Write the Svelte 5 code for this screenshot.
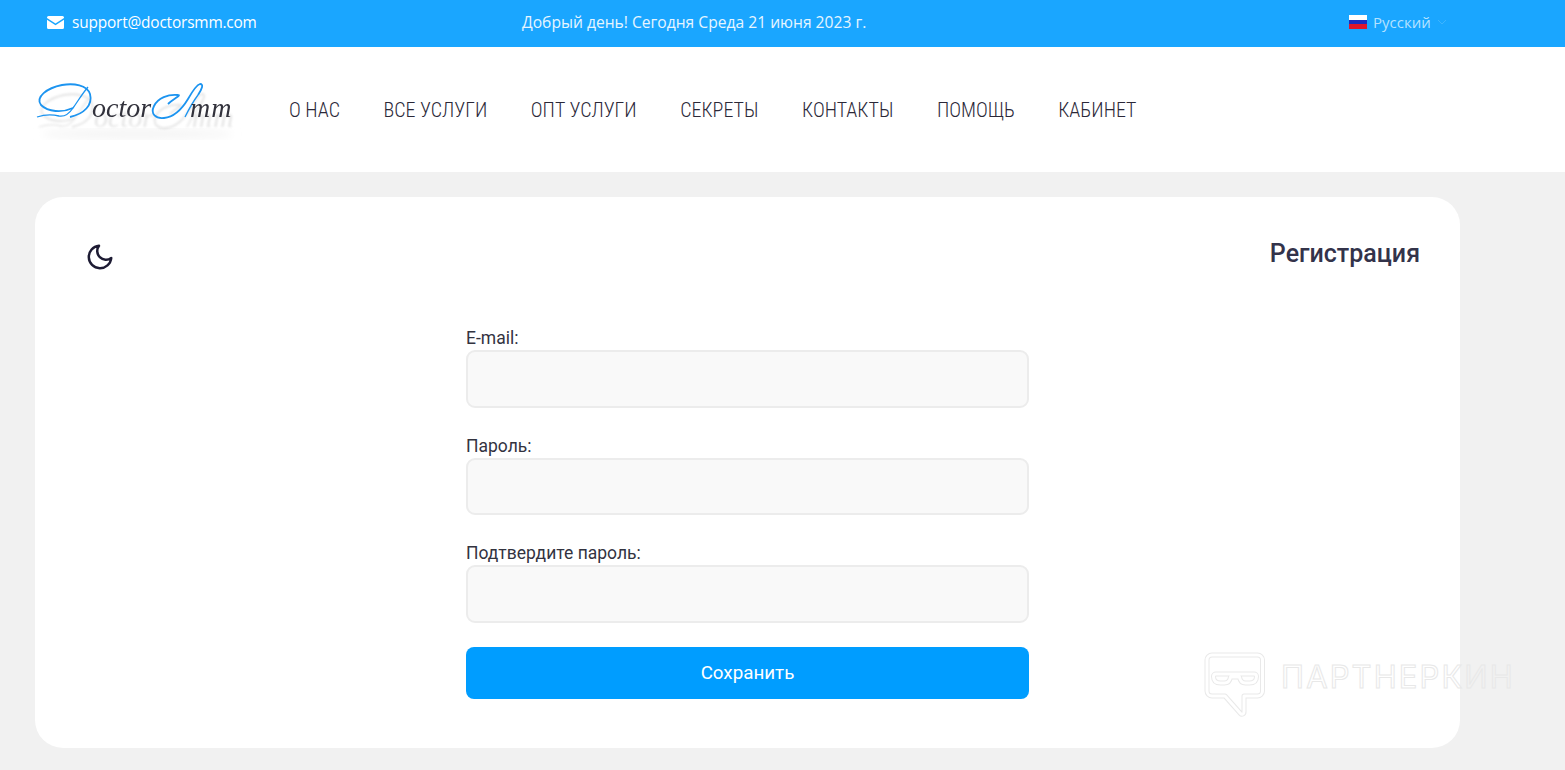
<script>
  const navItems = ['О НАС', 'ВСЕ УСЛУГИ', 'ОПТ УСЛУГИ', 'СЕКРЕТЫ', 'КОНТАКТЫ', 'ПОМОЩЬ', 'КАБИНЕТ'];
  const fields = [
    { id: 'email', label: 'E-mail:', type: 'email' },
    { id: 'password', label: 'Пароль:', type: 'password' },
    { id: 'confirm', label: 'Подтвердите пароль:', type: 'password' }
  ];
</script>

<div class="topbar">
  <div class="support">
    <svg class="mail" viewBox="0 0 17 13" width="17" height="13">
      <path d="M1.500 0h14A1.500 1.500 0 0 1 17 1.500v.6L8.500 7.600 0 2.100v-.6A1.500 1.500 0 0 1 1.500 0z" fill="#fff" />
      <path d="M0 3.800l8.500 5.400L17 3.800v7.700a1.500 1.500 0 0 1-1.500 1.500h-14A1.500 1.500 0 0 1 0 11.500z" fill="#fff" />
    </svg>
    <span>support@doctorsmm.com</span>
  </div>
  <div class="greeting">Добрый день! Сегодня Среда 21 июня 2023 г.</div>
  <div class="lang">
    <span class="flag"><i class="white"></i><i class="blue"></i><i class="red"></i></span>
    <span class="lang-name">Русский</span>
    <svg class="chevron" viewBox="0 0 10 6" width="10" height="6">
      <path d="M1 1l4 4 4-4" fill="none" stroke="#3db4ff" stroke-width="1" />
    </svg>
  </div>
</div>

<header>
  <div class="logo">
    <svg viewBox="0 0 210 70" width="210" height="70">
      <defs>
        <filter id="soft"><feGaussianBlur stdDeviation="4" /></filter>
      </defs>
      <ellipse cx="105" cy="59" rx="96" ry="5" fill="#f4f4f4" filter="url(#soft)" />
      <g class="mark">
        <path class="swash" d="M41 33C30 38 16 37 9 30 3 22 15 13 30 10 42 8 55 10 58 19 61 30 52 39 38 42" />
        <path class="swash thin" d="M56 12C50 19 46 26 41 33 37 39 33 42 27 41 19 39 11 40 5 42" />
        <text x="60" y="42" class="logo-ink">octor</text>
        <path class="swash" d="M136 29C141 24 150 20 146 20 136 19 126 23 122 31 118 39 124 44 132 43 142 42 150 34 156 24 160 17 164 10 168 9 172 9 170 14 166 20" />
        <path class="swash thin" d="M166 20C160 28 156 36 153 42" />
        <text x="158" y="42" class="logo-ink wide">mm</text>
      </g>
    </svg>
  </div>
  <nav>
    {#each navItems as item}
      <a href="#top">{item}</a>
    {/each}
  </nav>
</header>

<main>
  <section class="card">
    <div class="card-head">
      <svg class="moon" viewBox="0 0 24 24" width="30" height="30">
        <path d="M21 12.800A9 9 0 1 1 11.200 3a7 7 0 0 0 9.800 9.800z" fill="none" stroke="#1d1b33" stroke-width="2" stroke-linecap="round" stroke-linejoin="round" />
      </svg>
      <h1>Регистрация</h1>
    </div>
    <form>
      {#each fields as field}
        <div class="field">
          <label for={field.id}>{field.label}</label>
          <input id={field.id} type={field.type} />
        </div>
      {/each}
      <button type="button">Сохранить</button>
    </form>

    <div class="watermark">
      <svg viewBox="0 0 62 66" width="62" height="66">
        <g fill="none" stroke-linejoin="round">
          <path class="wm-out" d="M8 3h45.500a5 5 0 0 1 5 5v31a5 5 0 0 1-5 5H40V60a2 2 0 0 1-3.500 1.500L21 44H8a5 5 0 0 1-5-5V8a5 5 0 0 1 5-5z" />
          <path class="wm-in" d="M8 3h45.500a5 5 0 0 1 5 5v31a5 5 0 0 1-5 5H40V60a2 2 0 0 1-3.500 1.500L21 44H8a5 5 0 0 1-5-5V8a5 5 0 0 1 5-5z" />
          <path class="wm-out" d="M12 22H50a2.500 2.500 0 0 1 2.500 2.500q0 6.500-7 6.500h-4q-5 0-6-6h-9q-1 6-6 6h-4q-7 0-7-6.500A2.500 2.500 0 0 1 12 22z" />
          <path class="wm-in" d="M12 22H50a2.500 2.500 0 0 1 2.500 2.500q0 6.500-7 6.500h-4q-5 0-6-6h-9q-1 6-6 6h-4q-7 0-7-6.500A2.500 2.500 0 0 1 12 22z" />
        </g>
      </svg>
      <span>ПАРТНЕРКИН</span>
    </div>
  </section>
</main>

<style>
  :global(body) {
    background: #f1f1f1;
    font-family: Roboto, "Liberation Sans", sans-serif;
    overflow: hidden;
  }

  .topbar {
    height: 47px;
    background: #1aa6ff;
    color: #fff;
    display: grid;
    grid-template-columns: 522px 827px 1fr;
    align-items: center;
    padding-bottom: 3px;
    box-sizing: border-box;
  }

  .support {
    display: flex;
    align-items: center;
    gap: 8px;
    padding-left: 47px;
    font-family: "Open Sans", Roboto, sans-serif;
    font-size: 15.400px;
    letter-spacing: -0.17px;
  }

  .mail {
    display: block;
  }

  .greeting {
    font-family: "Open Sans", Roboto, sans-serif;
    font-size: 15.630px;
    color: #e6f5ff;
  }

  .lang {
    display: flex;
    align-items: center;
    font-family: "Open Sans", Roboto, sans-serif;
    font-size: 15px;
    color: #b5e2ff;
  }

  .flag {
    display: flex;
    flex-direction: column;
    width: 18px;
    height: 14px;
    margin-right: 6px;
  }

  .flag i {
    flex: 1;
  }

  .white { background: #fff; }
  .blue { background: #1c2ec0; }
  .red { background: #e0162b; }

  .chevron {
    margin-left: 6px;
  }

  header {
    height: 125px;
    background: #fff;
    display: flex;
    align-items: center;
  }

  .logo {
    width: 289px;
    padding-left: 32px;
    box-sizing: border-box;
    flex: none;
    height: 70px;
    margin-top: 1px;
  }

  .logo svg {
    display: block;
  }

  .mark {
    filter: drop-shadow(2px 10px 0.8px rgba(130, 130, 130, 0.22));
  }

  .swash {
    fill: none;
    stroke: #1c94f0;
    stroke-width: 1.800;
  }

  .swash.thin {
    stroke-width: 1.300;
  }

  .logo-ink {
    font: italic 28px "Liberation Serif", serif;
    fill: #32323c;
  }

  .logo-ink.wide {
    letter-spacing: 1px;
  }

  nav {
    display: flex;
    gap: 43.600px;
  }

  nav a {
    color: #2b2838;
    text-decoration: none;
    font-family: Roboto, sans-serif;
    font-weight: 300;
    font-size: 20px;
    font-stretch: 75%;
  }

  main {
    padding: 25px 105px 22px 35px;
  }

  .card {
    position: relative;
    height: 551px;
    box-sizing: border-box;
    background: #fff;
    border-radius: 28px;
    padding: 42px 40px 0 50px;
  }

  .card-head {
    display: flex;
    justify-content: space-between;
    align-items: flex-start;
    height: 88px;
  }

  .moon {
    display: block;
    margin-top: 3px;
  }

  h1 {
    margin: 0;
    font-size: 25px;
    line-height: 30px;
    font-weight: 500;
    color: #33334a;
  }

  form {
    width: 563px;
    margin-left: 381px;
  }

  .field + .field {
    margin-top: 27px;
  }

  label {
    display: block;
    font-size: 17.500px;
    line-height: 23px;
    height: 23px;
    color: #33333f;
  }

  input {
    display: block;
    width: 100%;
    height: 57.600px;
    box-sizing: border-box;
    background: #f9f9f9;
    border: 2px solid #ececec;
    border-radius: 9px;
    outline: none;
  }

  button {
    display: block;
    width: 100%;
    height: 52px;
    margin-top: 24.500px;
    border: none;
    border-radius: 8px;
    background: #009dff;
    color: #fff;
    font-family: Roboto, sans-serif;
    font-size: 18.800px;
  }

  .watermark {
    position: absolute;
    left: 1169px;
    top: 455px;
    display: flex;
    align-items: flex-start;
    gap: 15px;
  }

  .watermark svg {
    display: block;
  }

  .wm-out {
    stroke: #e9e9e9;
    stroke-width: 5;
  }

  .wm-in {
    stroke: #fff;
    stroke-width: 3;
  }

  .watermark span {
    margin-top: 5px;
    font-family: Inter, Roboto, sans-serif;
    font-size: 31px;
    line-height: 40px;
    letter-spacing: 2.100px;
    color: transparent;
    -webkit-text-stroke: 1px #e8e8e8;
  }
</style>
